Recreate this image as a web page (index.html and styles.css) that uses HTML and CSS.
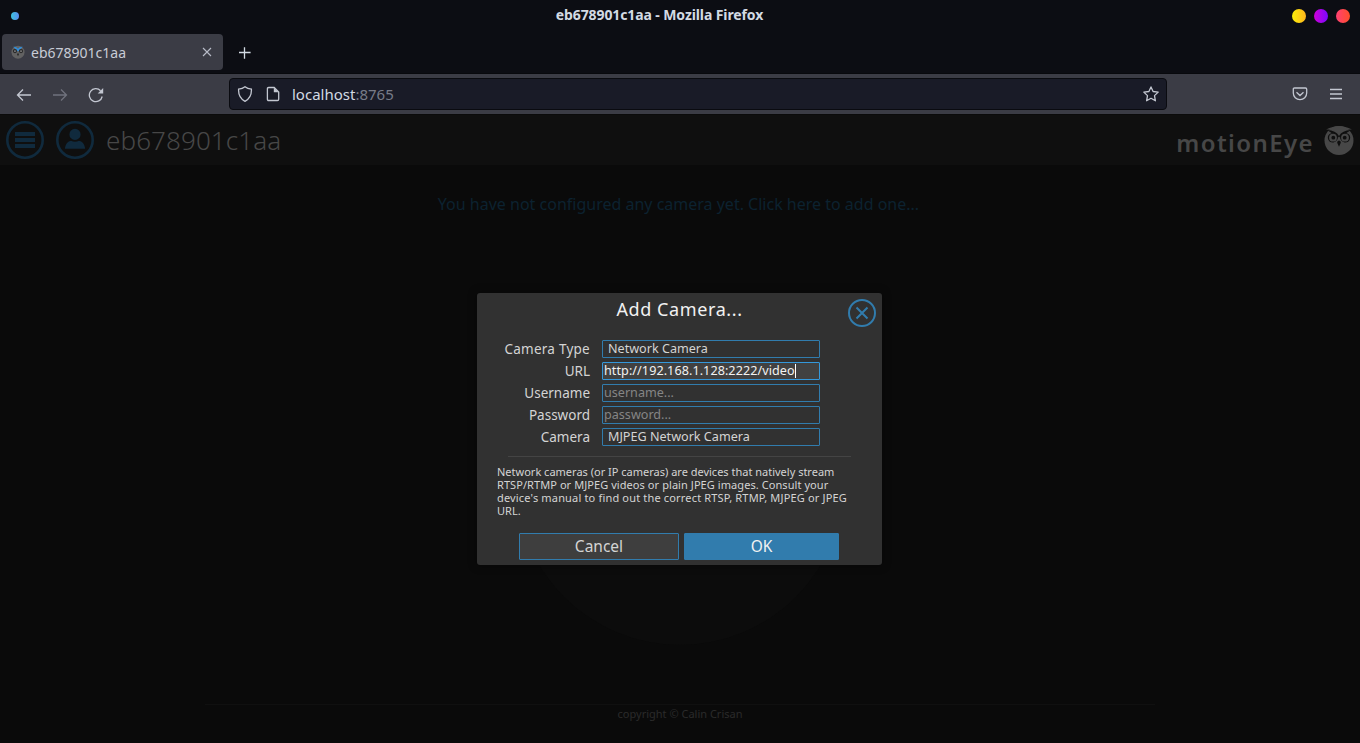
FILE: index.html
```
<!DOCTYPE html>
<html lang="en">
<head>
<meta charset="utf-8">
<title>eb678901c1aa</title>
<link rel="stylesheet" href="styles.css">
</head>
<body>
<div class="titlebar">
  <span class="dot dot-blue"></span>
  <span class="window-title">eb678901c1aa - Mozilla Firefox</span>
  <span class="window-buttons"><i class="dot dot-yellow"></i><i class="dot dot-purple"></i><i class="dot dot-red"></i></span>
</div>
<div class="tabs">
  <div class="tab">
    <svg class="favicon" viewBox="0 0 30 30"><circle cx="15" cy="15.500" r="14" fill="#626262"/><path d="M5 4Q11 3 15 8Q19 3 25 4L20 9L15 14L10 9Z" fill="#318edb"/><circle cx="8.500" cy="13" r="4.500" fill="#292929"/><circle cx="21.500" cy="13" r="4.500" fill="#292929"/><circle cx="8.500" cy="13" r="2" fill="#888"/><circle cx="21.500" cy="13" r="2" fill="#888"/><path d="M15 17l2 3-2 4-2-4z" fill="#222"/></svg>
    <span class="tab-title">eb678901c1aa</span>
    <svg class="tab-close" viewBox="0 0 10 10"><path d="M1 1l8 8M9 1l-8 8"/></svg>
  </div>
  <svg class="new-tab" viewBox="0 0 12 12"><path d="M5.500 .2v11.600M0 5.500h11.600"/></svg>
</div>
<div class="toolbar">
  <div class="nav">
    <svg viewBox="0 0 16 16"><path d="M15 8H1.500M7 2.500L1.500 8L7 13.500"/></svg>
    <svg class="disabled" viewBox="0 0 16 16"><path d="M1 8h13.500M9 2.500L14.500 8L9 13.500"/></svg>
    <svg viewBox="0 0 16 16"><path d="M14.200 9.500A6.500 6.500 0 1 1 12.600 3.700"/><path d="M15.200 1v5.500H9.700z" fill="currentColor" stroke="none"/></svg>
  </div>
  <div class="urlbar">
    <svg viewBox="0 0 16 16"><path d="M8 .8C9.800 2.300 12 3 14.400 3.200C14.700 8.500 12.800 12.800 8 15.300C3.200 12.800 1.300 8.500 1.600 3.200C4 3 6.200 2.300 8 .8Z"/></svg>
    <svg viewBox="0 0 16 16"><path d="M3.700 1.500h5.500l4.500 4.500v7.200q0 1.300-1.300 1.300H3.700q-1.300 0-1.300-1.300V2.800q0-1.300 1.300-1.300z"/><path d="M8.800 1.500v4.800h4.900z" fill="currentColor" stroke="none"/></svg>
    <span class="address">localhost<span>:8765</span></span>
    <svg viewBox="0 0 16 16"><path d="M8 .9l2.100 4.600 5.100.6-3.700 3.500.9 5.200L8 12.300l-4.400 2.500.9-5.200L.8 6.100l5.100-.6z" stroke-linejoin="round"/></svg>
  </div>
  <div class="actions">
    <svg viewBox="0 0 16 16"><path d="M2.500 2h11q1.200 0 1.200 1.200V7a6.700 6.700 0 0 1-13.400 0V3.200Q1.300 2 2.500 2zM4.500 6.300L8 9.500l3.500-3.200"/></svg>
    <svg viewBox="0 0 16 16"><path d="M2 3.500h12M2 8h12M2 12.500h12"/></svg>
  </div>
</div>
<main class="page">
  <header class="header">
    <svg class="round" viewBox="0 0 38 38"><circle cx="19" cy="19" r="17.700"/><path d="M9 11h20v4H9zM9 17h20v4H9zM9 23h20v4H9z"/></svg>
    <svg class="round" viewBox="0 0 38 38"><circle cx="19" cy="19" r="17.700"/><path d="M19 7.800a5.600 5.600 0 1 1 0 11.200a5.600 5.600 0 1 1 0-11.200zM9 27.800v-1q1-6 6-7q4 2 8 0q5 1 6 7v1z"/></svg>
    <span class="host">eb678901c1aa</span>
    <span class="brand">motionEye</span>
    <svg class="owl" viewBox="0 0 30 30"><circle cx="15" cy="15.500" r="14.500" fill="#474747"/><path d="M2 4.500Q12 4 15 9.500Q18 4 28 4.500Q21 1 15 1Q9 1 2 4.500Z" fill="#474747"/><path d="M3 5Q12 5.500 15 11Q18 5.500 27 5Q22 8.500 18 10.500Q20 7.500 23 8.200Q27 10 26 14Q24.500 18 20.500 17.500Q16 16 16 11.500L15 12.500L14 11.500Q14 16 9.500 17.500Q5.500 18 4 14Q3 10 7 8.200Q10 7.500 12 10.500Q8 8.500 3 5Z" fill="#0f0f0f"/><circle cx="9" cy="12.700" r="3.900" fill="#474747"/><circle cx="21" cy="12.700" r="3.900" fill="#474747"/><circle cx="9.300" cy="12.700" r="1.900" fill="#0f0f0f"/><circle cx="20.700" cy="12.700" r="1.900" fill="#0f0f0f"/><path d="M15 15.500q2 .5 1.800 2.300L15 21.800l-1.800-4Q13 16 15 15.500z" fill="#0f0f0f"/></svg>
  </header>
  <div class="notice">You have not configured any camera yet. Click here to add one...</div>
  <div class="watermark"></div>
  <footer class="footer">copyright © Calin Crisan</footer>
  <section class="dialog">
    <svg class="close" viewBox="0 0 28 28"><circle cx="14" cy="14" r="13"/><path d="M8.500 8.500l11 11M19.500 8.500l-11 11"/></svg>
    <h1>Add Camera...</h1>
    <div class="form">
      <label class="wide">Camera Type</label><div class="field select">Network Camera</div>
      <label>URL</label><div class="field focused">http://192.168.1.128:2222/video<i class="caret"></i></div>
      <label>Username</label><div class="field empty">username...</div>
      <label>Password</label><div class="field empty">password...</div>
      <label>Camera</label><div class="field select">MJPEG Network Camera</div>
    </div>
    <hr class="rule">
    <p class="help">Network cameras (or IP cameras) are devices that natively stream<br><span class="loose">RTSP/RTMP or MJPEG videos or plain JPEG images. Consult your</span><br><span class="looser">device's manual to find out the correct RTSP, RTMP, MJPEG or JPEG</span><br>URL.</p>
    <div class="buttons"><div class="button">Cancel</div><div class="button primary">OK</div></div>
  </section>
</main>
</body>
</html>
```

FILE: styles.css
```
* { box-sizing: border-box; }
body {
  margin: 0;
  width: 1360px;
  height: 743px;
  overflow: hidden;
  display: flex;
  flex-direction: column;
  background: #0c0d13;
  font-family: "Noto Sans", sans-serif;
}
svg { display: block; flex: none; fill: none; }

.titlebar {
  height: 34px;
  padding: 0 10px 3px 11px;
  display: grid;
  grid-template-columns: 58px 1fr 58px;
  align-items: center;
}
.dot { display: block; width: 14px; height: 14px; border-radius: 50%; }
.dot-blue { width: 8px; height: 8px; background: linear-gradient(90deg, #3cc3de, #5a8cf0); }
.dot-yellow { background: linear-gradient(90deg, #fcee09, #ffb61e); }
.dot-purple { background: linear-gradient(90deg, #d000d8, #7a08ff); }
.dot-red { background: linear-gradient(90deg, #ff4073, #ff4e2a); }
.window-title {
  padding: 0 42px 2px 0;
  text-align: center;
  font-size: 14px;
  font-weight: 700;
  line-height: 20px;
  letter-spacing: -.1px;
  color: #d3dae3;
}
.window-buttons { display: flex; gap: 8px; }

.tabs { height: 39px; padding-left: 2px; display: flex; align-items: flex-start; }
.tab {
  width: 221px;
  height: 36px;
  padding: 0 11px 0 9px;
  display: flex;
  align-items: center;
  border-radius: 4px;
  background: #3b3c45;
}
.favicon { width: 14px; height: 14px; }
.tab-title { flex: 1; margin-left: 6px; padding-top: 1px; font-size: 14px; line-height: 20px; color: #c8ccd6; }
.tab-close { width: 10px; height: 10px; stroke: #b8bcc8; stroke-width: 1.1; }
.new-tab { width: 12px; height: 12px; margin: 13px 0 0 16px; stroke: #d3dae3; stroke-width: 1.3; }

.toolbar {
  height: 41px;
  padding-top: 1px;
  display: flex;
  align-items: center;
  border-top: 1px solid #08090d;
  background: #3b3c45;
  color: #c3c7d1;
}
.toolbar svg { width: 16px; height: 16px; stroke: currentColor; stroke-width: 1.3; }
.nav { width: 229px; padding-left: 16px; display: flex; gap: 20px; }
.toolbar .disabled { color: #70727d; }
.urlbar {
  width: 938px;
  height: 32px;
  margin-top: -1px;
  padding: 0 7px;
  display: flex;
  align-items: center;
  gap: 12px;
  border: 1px solid #0a0b10;
  border-radius: 4px;
  background: #191b27;
}
.address { flex: 1; margin-left: -1px; font-size: 15px; line-height: 20px; color: #d3dae3; }
.address span { color: #777b88; }
.actions { margin: -1px 0 0 auto; padding-right: 16px; display: flex; gap: 20px; }

.page { position: relative; flex: 1; overflow: hidden; background: #0a0a0a; }
.header {
  height: 51px;
  padding: 0 6px;
  display: flex;
  align-items: center;
  background: #0f0f0f;
  border-top: 1px solid #0b0b0b;
}
.round { width: 38px; height: 38px; margin-right: 12px; }
.round circle { stroke: #102a3d; stroke-width: 2.6; }
.round path { fill: #102a3d; }
.host { font-size: 26px; font-weight: 350; line-height: 38px; letter-spacing: .1px; color: #474747; }
.brand {
  margin: 6px 10px 0 auto;
  font-size: 24px;
  font-weight: 600;
  line-height: 36px;
  letter-spacing: 1.4px;
  color: #474747;
}
.owl { width: 30px; height: 30px; margin-top: -1px; }
.notice { margin-top: 28px; padding-right: 3px; text-align: center; font-size: 16px; line-height: 22px; color: #0c2230; }
.watermark { width: 328px; height: 328px; margin: 102px auto 0; border-radius: 50%; background: #0c0c0c; }
.footer {
  width: 950px;
  margin: 59px auto 0;
  padding-top: 1px;
  border-top: 1px solid #101010;
  text-align: center;
  font-size: 11px;
  line-height: 16px;
  color: #2b2b2b;
}

/* Modal floats over the camera area. */
.dialog {
  position: absolute;
  left: 477px;
  top: 179px;
  width: 405px;
  height: 272px;
  border-radius: 3px;
  background: #313131;
  color: #d4d4d4;
  box-shadow: 0 0 10px rgba(0, 0, 0, .4);
}
.close { position: absolute; top: 6px; right: 6px; width: 28px; height: 28px; stroke: #317cad; stroke-width: 2; }
.dialog h1 {
  margin: 0;
  padding: 3px 0 1px;
  text-align: center;
  font-size: 18px;
  font-weight: 400;
  line-height: 26px;
  letter-spacing: .6px;
  color: #f2f2f2;
}
.form {
  padding: 17px 0 0 12px;
  display: grid;
  grid-template-columns: 101px 218px;
  column-gap: 12px;
  row-gap: 4px;
}
.form label { height: 18px; text-align: right; font-size: 13.500px; line-height: 19px; }
.form .wide { letter-spacing: .25px; }
.field {
  height: 18px;
  padding-left: 1px;
  border: 1px solid #317cad;
  border-radius: 1px;
  font-size: 12.600px;
  line-height: 15px;
  white-space: nowrap;
}
.select { padding-left: 5px; }
.empty { color: #858585; }
.focused { display: flex; border-color: #3498db; background: #414141; color: #f2f2f2; letter-spacing: .07px; }
.caret { width: 1px; height: 14px; margin-top: 1px; background: #fff; }
.rule { height: 1px; margin: 10px 31px 0; border: 0; background: #444; }
.help {
  margin: 8px 0 0 20px;
  font-size: 11px;
  line-height: 13px;
  white-space: nowrap;
}
.loose { letter-spacing: .07px; }
.looser { letter-spacing: .17px; }
.buttons { margin: 16px 0 0 42px; display: flex; gap: 5px; }
.button {
  width: 160px;
  height: 27px;
  border: 1px solid #317cad;
  border-radius: 1px;
  background: #3e3e3e;
  text-align: center;
  font-size: 15.500px;
  line-height: 24px;
}
.primary { width: 155px; background: #317cad; color: #f2f2f2; }
```
